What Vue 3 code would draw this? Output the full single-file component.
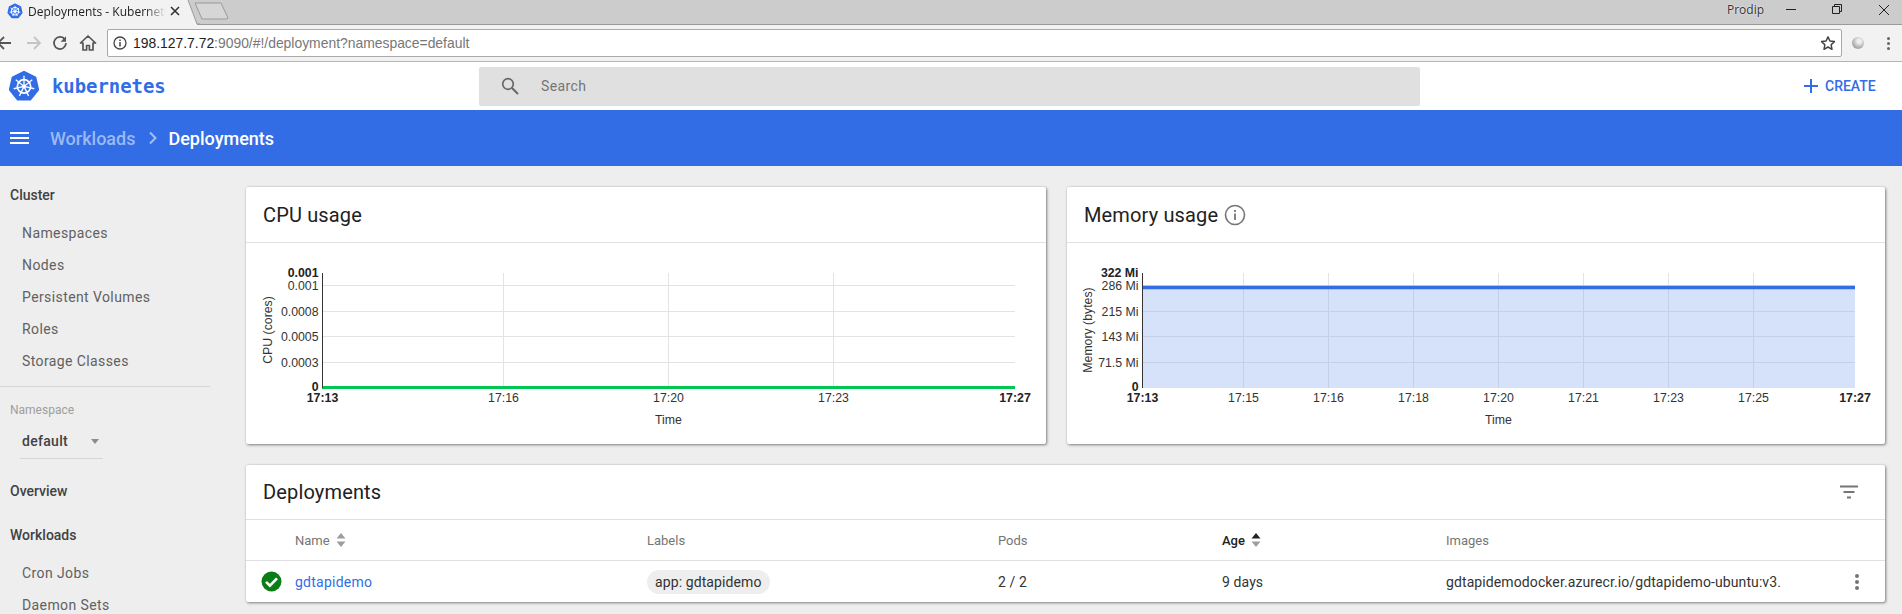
<script setup>
const spokes = [0, 1, 2, 3, 4, 5, 6].map((k) => k * (360 / 7))
const heptagon = [0, 1, 2, 3, 4, 5, 6]
  .map((k) => {
    const a = ((-90 + (k * 360) / 7) * Math.PI) / 180
    return `${(12 + 10.6 * Math.cos(a)).toFixed(2)},${(12.3 + 10.6 * Math.sin(a)).toFixed(2)}`
  })
  .join(' ')

const gridY = [285.5, 311.5, 336.5, 362.5]

const charts = [
  {
    key: 'cpu',
    ox: 246,
    yTitle: 'CPU (cores)',
    yx: 268,
    x0: 322.5,
    x1: 1015,
    vx: [503.5, 668.5, 833.5],
    labels: ['17:16', '17:20', '17:23'],
    lx: [503.5, 668.5, 833.5],
    top: '0.001',
    ticks: ['0.001', '0.0008', '0.0005', '0.0003'],
    timeX: 668.5,
  },
  {
    key: 'mem',
    ox: 1067,
    yTitle: 'Memory (bytes)',
    yx: 1088,
    x0: 1142.5,
    x1: 1855,
    vx: [1243.5, 1328.5, 1413.5, 1498.5, 1583.5, 1668.5, 1753.5],
    labels: ['17:15', '17:16', '17:18', '17:20', '17:21', '17:23', '17:25'],
    lx: [1243.5, 1328.5, 1413.5, 1498.5, 1583.5, 1668.5, 1753.5],
    top: '322 Mi',
    ticks: ['286 Mi', '215 Mi', '143 Mi', '71.5 Mi'],
    timeX: 1498.5,
  },
]

const clusterItems = ['Namespaces', 'Nodes', 'Persistent Volumes', 'Roles', 'Storage Classes']
const workloadItems = ['Cron Jobs', 'Daemon Sets']
</script>

<template>
  <div class="page">
    <!-- browser chrome -->
    <div class="tabstrip">
      <svg class="tabshape" width="200" height="25" viewBox="0 0 200 25">
        <polygon points="0,0 188,0 197,24 197,25 0,25" fill="#f2f2f2" />
        <polyline points="188,0 197,24 200,24" fill="none" stroke="#9a9a9a" />
      </svg>
      <svg class="favicon" width="16" height="16" viewBox="0 0 24 24">
        <polygon :points="heptagon" fill="#326de6" stroke="#326de6" stroke-width="2" stroke-linejoin="round" />
        <circle cx="12" cy="12.3" r="5.6" fill="none" stroke="#fff" stroke-width="1.6" />
        <line v-for="a in spokes" :key="a" x1="12" y1="12.3" x2="12" y2="4.2" stroke="#fff" stroke-width="1.3" :transform="`rotate(${a} 12 12.3)`" />
      </svg>
      <span class="tabtitle">Deployments - Kubernetes</span>
      <svg class="tabclose" width="10" height="10" viewBox="0 0 10 10">
        <path d="M1 1L9 9M9 1L1 9" stroke="#333" stroke-width="1.6" />
      </svg>
      <svg class="newtab" width="36" height="20" viewBox="0 0 36 20">
        <polygon points="1,1 27,1 34,16 33,17 8,17" fill="#d6d6d6" stroke="#9a9a9a" />
      </svg>
      <div class="winctl">
        <span class="user">Prodip</span>
        <svg width="10" height="10" viewBox="0 0 10 10" class="w-min"><path d="M0 5.5H10" stroke="#222" /></svg>
        <svg width="10" height="10" viewBox="0 0 10 10" class="w-res"><path d="M.5 2.5h7v7h-7zM2.5 2.5v-2h7v7h-2" fill="none" stroke="#222" /></svg>
        <svg width="12" height="12" viewBox="0 0 12 12" class="w-cls"><path d="M1 1L11 11M11 1L1 11" stroke="#222" /></svg>
      </div>
    </div>
    <div class="urlbar">
      <svg class="nav back" width="16" height="16" viewBox="0 0 16 16"><path d="M8 2L2 8l6 6M2 8h13" fill="none" stroke="#555" stroke-width="1.8" /></svg>
      <svg class="nav fwd" width="16" height="16" viewBox="0 0 16 16"><path d="M8 2l6 6-6 6M14 8H1" fill="none" stroke="#c4c4c4" stroke-width="1.8" /></svg>
      <svg class="nav reload" width="16" height="16" viewBox="0 0 24 24"><path d="M19.5 7A9 9 0 1 0 21 12" fill="none" stroke="#555" stroke-width="2.6" /><path d="M21 2v8h-8z" fill="#555" /></svg>
      <svg class="nav home" width="18" height="18" viewBox="0 0 18 18"><path d="M9 2L1.5 9H4v7h3.6v-4.500h2.800V16H14V9h2.500z" fill="none" stroke="#555" stroke-width="1.700" stroke-linejoin="round" /></svg>
      <div class="omnibox">
        <svg width="14" height="14" viewBox="0 0 14 14" class="info"><circle cx="7" cy="7" r="6" fill="none" stroke="#444" stroke-width="1.300" /><path d="M7 6v4.500M7 3.400v1.500" stroke="#444" stroke-width="1.500" /></svg>
        <span class="url"><b>198.127.7.72</b>:9090/#!/deployment?namespace=default</span>
        <svg class="star" width="16" height="16" viewBox="0 0 24 24"><path d="M12 2.800l2.900 6.300 6.800.8-5 4.700 1.300 6.800-6-3.400-6 3.400 1.300-6.800-5-4.700 6.800-.8z" fill="none" stroke="#444" stroke-width="2.200" stroke-linejoin="round" /></svg>
      </div>
      <span class="ext"></span>
      <span class="menu"><i></i><i></i><i></i></span>
    </div>

    <!-- app toolbar -->
    <header class="toolbar">
      <div class="brand">
        <svg class="logo" width="32" height="32" viewBox="0 0 24 24">
          <polygon :points="heptagon" fill="#326de6" stroke="#326de6" stroke-width="2" stroke-linejoin="round" />
          <circle cx="12" cy="12.3" r="5" fill="none" stroke="#fff" stroke-width="1.300" />
          <line v-for="a in spokes" :key="a" x1="12" y1="12.300" x2="12" y2="4.400" stroke="#fff" stroke-width="1" :transform="`rotate(${a} 12 12.300)`" />
          <circle cx="12" cy="12.300" r="1.400" fill="#fff" />
        </svg>
        <span class="wordmark">kubernetes</span>
      </div>
      <div class="search">
        <svg width="20" height="20" viewBox="0 0 20 20"><circle cx="8" cy="8" r="5.300" fill="none" stroke="#666" stroke-width="1.700" /><path d="M12 12l6 6" stroke="#666" stroke-width="1.900" /></svg>
        <span>Search</span>
      </div>
      <div class="create">
        <svg width="16" height="16" viewBox="0 0 16 16"><path d="M8 1v14M1 8h14" stroke="#326de6" stroke-width="2" /></svg>
        <span>CREATE</span>
      </div>
    </header>

    <!-- breadcrumb bar -->
    <div class="bluebar">
      <span class="burger"><i></i><i></i><i></i></span>
      <span class="crumb-link">Workloads</span>
      <svg width="10" height="14" viewBox="0 0 10 14" class="chev"><path d="M2 1.500L7.500 7 2 12.500" fill="none" stroke="#a4bff5" stroke-width="2" /></svg>
      <span class="crumb-cur">Deployments</span>
    </div>

    <div class="body">
      <nav class="side">
        <div class="s-head first">Cluster</div>
        <div v-for="i in clusterItems" :key="i" class="s-item">{{ i }}</div>
        <div class="s-div"></div>
        <div class="s-label">Namespace</div>
        <div class="s-select"><span>default</span><i></i></div>
        <div class="s-head over">Overview</div>
        <div class="s-head work">Workloads</div>
        <div v-for="i in workloadItems" :key="i" class="s-item work-item">{{ i }}</div>
      </nav>

      <main class="main">
        <div class="chartrow">
          <section v-for="c in charts" :key="c.key" class="card chartcard">
            <div class="cardhead">
              <h2>{{ c.key === 'cpu' ? 'CPU usage' : 'Memory usage' }}</h2>
              <svg v-if="c.key === 'mem'" class="infoicon" width="22" height="22" viewBox="0 0 22 22">
                <circle cx="11" cy="11" r="9.500" fill="none" stroke="#757575" stroke-width="1.600" />
                <path d="M11 9.500v6.500M11 6v2" stroke="#757575" stroke-width="1.800" />
              </svg>
            </div>
            <svg class="chart" width="100%" height="201">
              <g :transform="`translate(${-c.ox} -243)`" class="plot">
                <rect v-if="c.key === 'mem'" x="1142" y="286" width="713" height="102" fill="#d6e2f9" />
                <line v-for="y in gridY" :key="y" :x1="c.x0" :x2="c.x1" :y1="y" :y2="y" :stroke="c.key === 'mem' && y > 290 ? '#c3d0e8' : '#e3e3e3'" />
                <template v-for="x in c.vx" :key="x">
                  <line :x1="x" :x2="x" y1="273" :y2="c.key === 'mem' ? 286 : 387" stroke="#e3e3e3" />
                  <line v-if="c.key === 'mem'" :x1="x" :x2="x" y1="286" y2="388" stroke="#c3d0e8" />
                </template>
                <rect v-if="c.key === 'mem'" x="1142" y="285" width="713" height="5" fill="#326de6" opacity=".25" />
                <rect v-if="c.key === 'mem'" x="1142" y="286" width="713" height="3" fill="#326de6" />
                <rect v-else x="322" y="386" width="693" height="3" fill="#00c752" />
                <line :x1="c.x0" :x2="c.x0" y1="273" y2="388" stroke="#333" />
                <text :x="c.x0 - 4" y="277" text-anchor="end" font-weight="700">{{ c.top }}</text>
                <text v-for="(t, i) in c.ticks" :key="t" :x="c.x0 - 4" :y="gridY[i] + 4" text-anchor="end">{{ t }}</text>
                <text :x="c.x0 - 4" y="391" text-anchor="end" font-weight="700">0</text>
                <text :x="c.x0" y="402" text-anchor="middle" font-weight="700">17:13</text>
                <text v-for="(t, i) in c.labels" :key="t" :x="c.lx[i]" y="402" text-anchor="middle">{{ t }}</text>
                <text :x="c.x1" y="402" text-anchor="middle" font-weight="700">17:27</text>
                <text :x="c.timeX" y="424" text-anchor="middle">Time</text>
                <text :transform="`translate(${c.yx + 4} 330) rotate(-90)`" text-anchor="middle" class="ytitle">{{ c.yTitle }}</text>
              </g>
            </svg>
          </section>
        </div>

        <section class="card table">
          <div class="cardhead">
            <h2>Deployments</h2>
            <svg class="filter" width="20" height="14" viewBox="0 0 20 14"><path d="M1 1.500h18M4.500 7h11M8 12.500h4" stroke="#757575" stroke-width="2" /></svg>
          </div>
          <div class="grid thead">
            <span></span>
            <span class="th">Name
              <svg class="sort" width="10" height="14" viewBox="0 0 10 14"><path d="M5 0l4.500 5.500H.5zM5 14L.5 8.500h9z" fill="#9e9e9e" /></svg>
            </span>
            <span class="th">Labels</span>
            <span class="th">Pods</span>
            <span class="th active">Age
              <svg class="sort" width="10" height="14" viewBox="0 0 10 14"><path d="M5 0l4.500 5.500H.5z" fill="#222" /><path d="M5 14L.5 8.500h9z" fill="#9e9e9e" /></svg>
            </span>
            <span class="th">Images</span>
            <span></span>
          </div>
          <div class="grid trow">
            <span class="ok">
              <svg width="21" height="21" viewBox="0 0 21 21"><circle cx="10.500" cy="10.500" r="10" fill="#0a7d16" /><path d="M5 10.800l3.900 3.900L16 7.300" fill="none" stroke="#fff" stroke-width="2.600" /></svg>
            </span>
            <span class="link">gdtapidemo</span>
            <span><span class="chip">app: gdtapidemo</span></span>
            <span>2 / 2</span>
            <span>9 days</span>
            <span>gdtapidemodocker.azurecr.io/gdtapidemo-ubuntu:v3.</span>
            <span class="kebab"><i></i><i></i><i></i></span>
          </div>
        </section>
      </main>
    </div>
  </div>
</template>

<style>
html, body { overflow: hidden; }
</style>

<style scoped>
.page {
  width: 1902px;
  height: 614px;
  overflow: hidden;
  background: #eeeeee;
  font-family: Roboto, "Liberation Sans", sans-serif;
  display: flex;
  flex-direction: column;
}

/* browser chrome */
.tabstrip {
  height: 25px;
  flex: none;
  position: relative;
  background: #cccccc;
  border-bottom: 1px solid #9a9a9a;
  box-sizing: border-box;
}
.tabshape { position: absolute; left: 0; top: 0; }
.favicon { position: absolute; left: 7px; top: 3px; }
.tabtitle {
  position: absolute;
  left: 28px;
  top: 3px;
  width: 138px;
  overflow: hidden;
  white-space: nowrap;
  font: 12px/17px "Open Sans", sans-serif;
  color: #222;
  -webkit-mask-image: linear-gradient(90deg, #000 85%, transparent);
  mask-image: linear-gradient(90deg, #000 85%, transparent);
}
.tabclose { position: absolute; left: 170px; top: 6px; }
.newtab { position: absolute; left: 194px; top: 2px; }
.winctl { position: absolute; inset: 0; }
.user {
  position: absolute;
  left: 1727px;
  top: 2px;
  font: 12px/16px "Open Sans", sans-serif;
  color: #333;
  text-shadow: 0 0 2px #fff;
}
.w-min { position: absolute; left: 1786px; top: 4px; }
.w-res { position: absolute; left: 1832px; top: 4px; }
.w-cls { position: absolute; left: 1878px; top: 4px; }

.urlbar {
  height: 37px;
  flex: none;
  box-sizing: border-box;
  background: #f2f2f2;
  border-bottom: 1px solid #b5b5b5;
  position: relative;
  display: flex;
  align-items: center;
}
.nav { position: absolute; top: 10px; }
.back { left: -4px; }
.fwd { left: 26px; }
.reload { left: 52px; }
.home { left: 79px; top: 9px; }
.omnibox {
  position: absolute;
  left: 107px;
  top: 4px;
  width: 1735px;
  height: 28px;
  box-sizing: border-box;
  background: #fff;
  border: 1px solid #a9a9a9;
  border-radius: 2px;
  display: flex;
  align-items: center;
}
.info { margin-left: 5px; }
.url {
  margin-left: 6px;
  font: 13.900px "Liberation Sans", sans-serif;
  color: #777;
}
.url b { font-weight: 400; color: #222; }
.star { margin-left: auto; margin-right: 5px; }
.ext {
  position: absolute;
  left: 1852px;
  top: 12px;
  width: 12px;
  height: 12px;
  border-radius: 50%;
  background: radial-gradient(circle at 60% 35%, #eee 0 18%, #a8a8a8 65%);
}
.menu {
  position: absolute;
  left: 1887px;
  top: 12px;
  display: flex;
  flex-direction: column;
  gap: 2px;
}
.menu i { width: 3px; height: 3px; border-radius: 50%; background: #666; }

/* app toolbar */
.toolbar {
  height: 48px;
  flex: none;
  background: #fff;
  display: flex;
  align-items: center;
  position: relative;
}
.brand { display: flex; align-items: center; margin-left: 8px; width: 471px; }
.wordmark {
  margin-left: 12px;
  font: 700 18.900px "DejaVu Sans Mono", monospace;
  letter-spacing: 0;
  color: #326de6;
}
.search {
  width: 941px;
  height: 39px;
  margin-top: 0;
  background: #e0e0e0;
  border-radius: 2px;
  display: flex;
  align-items: center;
  padding-left: 21px;
  box-sizing: border-box;
}
.search span { margin-left: 21px; font-size: 14px; color: #757575; letter-spacing: .4px; }
.create {
  position: absolute;
  left: 1803px;
  top: 0;
  height: 100%;
  display: flex;
  align-items: center;
  gap: 6px;
  color: #326de6;
  font-size: 14px;
  font-weight: 500;
}

/* blue bar */
.bluebar {
  height: 56px;
  flex: none;
  background: #326de6;
  display: flex;
  align-items: center;
  font-size: 18px;
  font-weight: 500;
  position: relative;
}
.burger {
  display: flex;
  flex-direction: column;
  gap: 3px;
  margin-left: 10px;
  width: 40px;
}
.burger i { width: 19px; height: 2px; background: #fff; }
.crumb-link { color: #9cb9f3; }
.chev { margin: 0 10px 0 13px; }
.crumb-cur { color: #fff; }

/* body */
.body { flex: 1; min-height: 0; display: flex; }
.side {
  width: 228px;
  flex: none;
  background: #eeeeee;
  font-size: 14px;
  color: #616161;
}
.s-head {
  height: 32px;
  line-height: 32px;
  padding-left: 10px;
  font-weight: 500;
  color: #424242;
}
.s-head.first { margin: 13px 0 6px; }
.s-head.over { margin-top: 16px; }
.s-head.work { margin: 12px 0 6px; }
.s-item {
  height: 32px;
  line-height: 32px;
  padding-left: 22px;
  letter-spacing: .4px;
}
.s-div {
  width: 210px;
  height: 1px;
  background: #d6d6d6;
  margin-top: 9px;
}
.s-label {
  margin-top: 16px;
  padding-left: 10px;
  font-size: 12px;
  line-height: 14px;
  color: #9e9e9e;
}
.s-select {
  margin: 7px 0 0 20px;
  width: 83px;
  height: 35px;
  box-sizing: border-box;
  border-bottom: 1px solid #d6d6d6;
  display: flex;
  align-items: center;
  padding: 0 2px;
  font-weight: 500;
  color: #424242;
  letter-spacing: .3px;
}
.s-select i {
  margin-left: auto;
  margin-right: 2px;
  border: 4.500px solid transparent;
  border-top: 5px solid #8c8c8c;
  border-bottom: 0;
}

.main {
  flex: 1;
  min-width: 0;
  padding: 21px 17px 0 18px;
  display: flex;
  flex-direction: column;
  gap: 21px;
}
.chartrow {
  display: grid;
  grid-template-columns: 800px 818px;
  gap: 21px;
}
.card {
  background: #fff;
  border-radius: 2px;
  box-shadow: 1px 1px 3px rgba(0, 0, 0, .45), 0 0 2px rgba(0, 0, 0, .12);
}
.chartcard { height: 257px; }
.cardhead {
  height: 55px;
  box-sizing: border-box;
  border-bottom: 1px solid #e0e0e0;
  padding-left: 17px;
  display: flex;
  align-items: center;
}
.chartcard .cardhead { height: 56px; }
.cardhead h2 {
  margin: 0;
  font-size: 20px;
  font-weight: 400;
  color: #212121;
  letter-spacing: .15px;
}
.infoicon { margin-left: 6px; }
.filter { margin-left: auto; margin-right: 26px; }
.chart { display: block; }
.plot text {
  font: 12.300px "Liberation Sans", sans-serif;
  fill: #333;
}
.plot text[font-weight="700"] { font-weight: 700; fill: #222; }

.grid {
  display: grid;
  grid-template-columns: 49px 352px 351px 224px 224px 399px 40px;
  align-items: center;
  font-size: 14px;
  color: #333;
}
.thead { height: 41px; border-bottom: 1px solid #e0e0e0; box-sizing: border-box; }
.th { color: #757575; font-size: 13px; display: flex; align-items: center; gap: 6px; }
.th.active { color: #212121; font-weight: 500; }
.trow { height: 41px; letter-spacing: .1px; }
.ok { display: flex; padding-left: 15px; }
.link { color: #326de6; letter-spacing: .25px; }
.chip {
  display: inline-block;
  height: 24px;
  line-height: 24px;
  padding: 0 8px;
  border-radius: 12px;
  background: #eeeeee;
  letter-spacing: .1px;
}
.kebab {
  display: flex;
  flex-direction: column;
  gap: 2px;
  margin-left: 10px;
}
.kebab i { width: 4px; height: 4px; border-radius: 50%; background: #757575; }
</style>
